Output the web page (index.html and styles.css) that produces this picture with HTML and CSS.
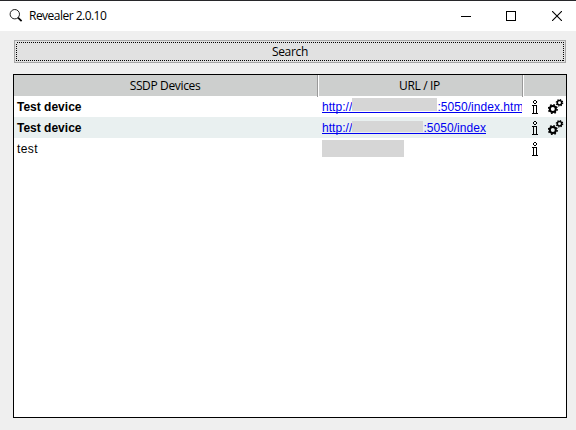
FILE: index.html
```html
<!DOCTYPE html>
<html lang="en">
<head>
<meta charset="utf-8">
<title>Revealer 2.0.10</title>
<link rel="stylesheet" href="styles.css">
</head>
<body>
<svg class="defs" aria-hidden="true">
  <symbol id="info" viewBox="0 0 6 14">
    <path class="pixel" d="M2 .5h2M2 3.5h2M1.5 1v2M4.5 1v2M0 5.5h5M1.5 6v7M4.5 5v8M0 13.5h6"/>
  </symbol>
  <symbol id="gears" viewBox="0 0 16 16">
    <circle cx="4.8" cy="10" r="3" fill="none" stroke="#000" stroke-width="2"/>
    <circle cx="4.8" cy="10" r="4.3" fill="none" stroke="#000" stroke-width="1.6" stroke-dasharray="1.65 1.727"/>
    <circle cx="11.5" cy="3.8" r="2.2" fill="none" stroke="#000" stroke-width="1.5"/>
    <circle cx="11.5" cy="3.8" r="3.2" fill="none" stroke="#000" stroke-width="1.2" stroke-dasharray="1.25 1.263"/>
  </symbol>
</svg>
<div class="window">
  <header class="titlebar">
    <svg class="app-icon" width="14" height="14" viewBox="0 0 14 14"><circle cx="5.8" cy="5.2" r="4.7" fill="none" stroke="#222" stroke-width="1"/><path d="M9 8.6l3.6 3.6" stroke="#000" stroke-width="1.7"/></svg>
    <h1 class="title">Revealer 2.0.10</h1>
    <div class="controls">
      <svg width="10" height="10"><path class="pixel" d="M0 5.5h10"/></svg>
      <svg width="10" height="10"><path class="pixel" d="M.5 .5h9v9h-9z"/></svg>
      <svg width="10" height="10"><path d="M0 0l10 10M10 0L0 10" stroke="#000" stroke-width="1.1"/></svg>
    </div>
  </header>
  <main class="content">
    <button class="search"><svg class="focus" width="548" height="19"><rect x=".5" y=".5" width="547" height="18"/></svg><span class="search-label">Search</span></button>
    <div class="table">
      <div class="row head"><div class="th th-name">SSDP Devices</div><div class="th th-url">URL / IP</div><div class="th last"></div></div>
      <div class="row">
        <div class="name bold">Test device</div>
        <div class="url"><a class="link">http://<span class="mask mask-a"></span>:5050/index.htm</a></div>
        <div class="actions"><svg class="info"><use href="#info"/></svg><svg class="gears"><use href="#gears"/></svg></div>
      </div>
      <div class="row alt">
        <div class="name bold">Test device</div>
        <div class="url"><a class="link">http://<span class="mask mask-b"></span>:5050/index</a></div>
        <div class="actions"><svg class="info"><use href="#info"/></svg><svg class="gears"><use href="#gears"/></svg></div>
      </div>
      <div class="row">
        <div class="name plain">test</div>
        <div class="url"><span class="mask mask-c"></span></div>
        <div class="actions"><svg class="info"><use href="#info"/></svg></div>
      </div>
    </div>
  </main>
</div>
</body>
</html>
```
FILE: styles.css
```css
* { box-sizing: border-box; }
body { margin: 0; font: 12px "Liberation Sans", Arial, sans-serif; color: #000; }
.defs { display: none; }
.pixel { fill: none; stroke: #000; stroke-width: 1; shape-rendering: crispEdges; }
.window { width: 576px; height: 430px; background: #efefef; overflow: hidden; }
.titlebar { height: 31px; border-top: 1px solid #27272a; background: #fff; display: flex; align-items: center; padding: 0 14px 0 9px; }
.app-icon { margin-right: 6px; }
.title { margin: 0; font: 12px/16px "Open Sans", "Noto Sans", sans-serif; letter-spacing: -0.52px; }
.controls { margin-left: auto; display: flex; gap: 36px; }
.controls svg:nth-child(2) { margin-left: -1px; }
.content { padding: 9px 9px 12px 13px; }
.search { display: block; position: relative; width: 552px; height: 23px; margin: 0 0 11px 1px; padding: 0; border: 1px solid #a6a6a6; background: #e1e1e1; font: 12px/21px "Open Sans", "Noto Sans", sans-serif; letter-spacing: -0.3px; }
.focus { position: absolute; left: 1px; top: 1px; }
.focus rect { fill: none; stroke: #000; stroke-dasharray: 1 1; shape-rendering: crispEdges; }
.table { width: 554px; height: 344px; border: 1px solid #000; background: #fff; }
.row { display: grid; grid-template-columns: 305px 205px 42px; height: 21px; line-height: 23px; }
.head { background: #cdcfce; }
.alt { background: #e9f0f0; }
.th { text-align: center; font: 12px/22px "Open Sans", "Noto Sans", sans-serif; letter-spacing: -0.35px; border-right: 1px solid #fff; box-shadow: inset -1px 0 #999; }
.th-name { padding-right: 2px; }
.th-url { padding-right: 3px; }
.th.last { border: 0; box-shadow: none; }
.name { padding-left: 3px; }
.bold { font-weight: bold; }
.plain { letter-spacing: 0.4px; }
.url { margin-left: 3px; width: 200px; height: 21px; overflow: hidden; white-space: nowrap; display: flex; align-items: flex-start; }
.link { display: flex; align-items: flex-start; height: 14px; margin-top: 3px; line-height: 17px; letter-spacing: 0.05px; color: #0000f0; border-bottom: 1px solid #0000f0; }
.mask { display: inline-block; background: #d6d6d6; }
.mask-a { width: 85px; height: 13px; margin-top: -1px; }
.mask-b { width: 71px; height: 11px; margin-top: 1px; }
.mask-c { width: 82px; height: 17px; margin-top: 2px; }
.actions { display: flex; align-items: flex-start; padding-left: 8px; }
.info { width: 6px; height: 14px; margin: 4px 10px 0 0; }
.gears { width: 16px; height: 16px; margin-top: 3px; }
```
